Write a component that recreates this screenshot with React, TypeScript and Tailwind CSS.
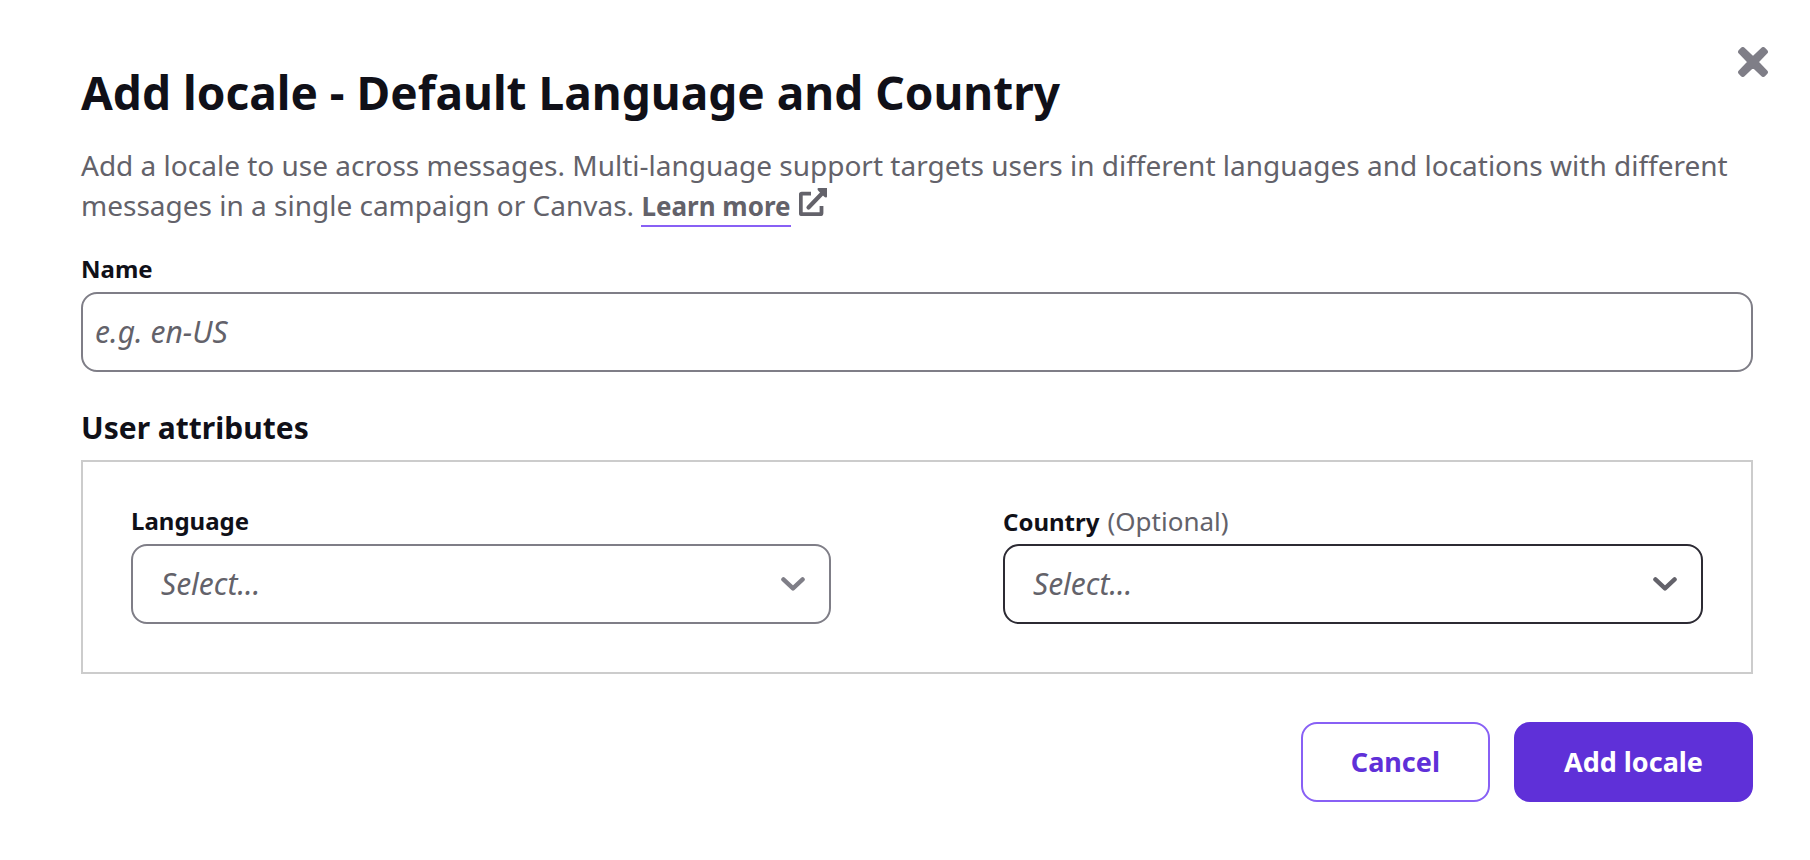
import { useState } from 'react';

interface SelectFieldProps {
  id: string;
  label: string;
  optional?: boolean;
  active?: boolean;
  options: string[];
}

const CloseIcon = () => (
  <svg viewBox="0 0 30 30" className="h-[30px] w-[30px]" fill="currentColor" stroke="currentColor" strokeWidth="5" strokeLinejoin="round">
    <path d="M4.8 2.6 L15 12.4 L25.2 2.6 L27.4 4.8 L17.6 15 L27.4 25.2 L25.2 27.4 L15 17.6 L4.8 27.4 L2.6 25.2 L12.4 15 L2.6 4.8 Z" />
  </svg>
);

const ExternalLinkIcon = () => (
  <svg viewBox="0 0 28 28" className="ml-2 inline-block h-7 w-7 align-baseline" fill="none" stroke="currentColor">
    <path d="M12 5.6 H2.8 Q1.8 5.6 1.8 6.6 V25.2 Q1.8 26.2 2.8 26.2 H21.5 Q22.5 26.2 22.5 25.2 V18" strokeWidth="3.8" />
    <path d="M9.5 19.5 L23 5.5" strokeWidth="4.2" strokeLinecap="round" />
    <path d="M18.5 1 Q18.5 0 19.5 0 H28 V8.5 Q28 9.5 27 9.5 Q26 9.5 25 8.5 L19.5 3 Q18.5 2 18.5 1 Z" fill="currentColor" stroke="none" />
  </svg>
);

const ChevronIcon = () => (
  <svg viewBox="0 0 24 14" className="h-[14px] w-6" fill="none" stroke="currentColor" strokeWidth="4.4" strokeLinecap="round" strokeLinejoin="round">
    <path d="M2.4 2.4 L12 11.4 L21.6 2.4" />
  </svg>
);

const SelectField = ({ id, label, optional, active, options }: SelectFieldProps) => {
  const [value, setValue] = useState('');

  return (
    <div>
      <label htmlFor={id} className="mb-[7px] flex h-8 items-baseline gap-2 text-2xl leading-8 font-bold text-[#101018]">
        {label}
        {optional && <span className="text-[26px] leading-8 font-normal text-[#63626a]">(Optional)</span>}
      </label>
      <div className="relative">
        <select
          id={id}
          value={value}
          onChange={(e) => setValue(e.target.value)}
          className={`block h-20 w-full appearance-none rounded-2xl border-2 bg-white pr-16 pb-0.5 pl-7 text-[30px] text-[#63626a] italic ${
            active ? 'border-[#2c2a33]' : 'border-[#7f7e87]'
          }`}
        >
          <option value="">Select...</option>
          {options.map((option) => (
            <option key={option} value={option}>{option}</option>
          ))}
        </select>
        <span
          className={`pointer-events-none absolute inset-y-0 right-[26px] flex items-center ${
            active ? 'text-[#63626a]' : 'text-[#7f7e87]'
          }`}
        >
          <ChevronIcon />
        </span>
      </div>
    </div>
  );
};

export default function App() {
  const [name, setName] = useState('');

  return (
    <div role="dialog" aria-labelledby="dialog-title" className="relative bg-white pt-16 pr-[57px] pb-14 pl-[81px] font-['Noto_Sans',sans-serif]">
      <button type="button" aria-label="Close" className="absolute top-[47px] right-[42px] text-[#7f7e87]">
        <CloseIcon />
      </button>

      <h1 id="dialog-title" className="text-[46px] leading-14 font-bold text-[#101018]">
        Add locale - Default Language and Country
      </h1>
      <p className="mt-[25px] text-[28px] leading-10 text-[#63626a]">
        Add a locale to use across messages. Multi-language support targets users in different languages and locations with different messages in a single campaign or Canvas.{' '}
        <a href="#learn-more">
          <span className="border-b-2 border-[#8860f5] pb-px text-[26px] font-bold">Learn more</span>
          <ExternalLinkIcon />
        </a>
      </p>

      <form onSubmit={(e) => e.preventDefault()}>
        <label htmlFor="locale-name" className="mt-[27px] mb-[7px] block text-2xl leading-8 font-bold text-[#101018]">
          Name
        </label>
        <input
          id="locale-name"
          type="text"
          value={name}
          onChange={(e) => setName(e.target.value)}
          placeholder="e.g. en-US"
          className="block h-20 w-full rounded-2xl border-2 border-[#7f7e87] px-3 pb-0.5 text-[30px] text-[#101018] placeholder:text-[#63626a] placeholder:italic"
        />

        <h2 className="mt-9 mb-3 text-[30px] leading-10 font-bold text-[#101018]">User attributes</h2>
        <div className="grid grid-cols-2 gap-x-[172px] border-2 border-[#cccccc] px-12 pt-[43px] pb-12">
          <SelectField id="language" label="Language" options={['English', 'French', 'Spanish']} />
          <SelectField id="country" label="Country" optional active options={['Canada', 'France', 'United States']} />
        </div>

        <div className="mt-12 flex justify-end gap-6">
          <button type="button" className="h-20 rounded-2xl border-2 border-[#8860f5] bg-white px-12 text-[27px] font-bold text-[#5f30d8]">
            Cancel
          </button>
          <button type="submit" className="h-20 rounded-2xl border-2 border-[#5f30d8] bg-[#5f30d8] px-12 text-[27px] font-bold text-white">
            Add locale
          </button>
        </div>
      </form>
    </div>
  );
}
